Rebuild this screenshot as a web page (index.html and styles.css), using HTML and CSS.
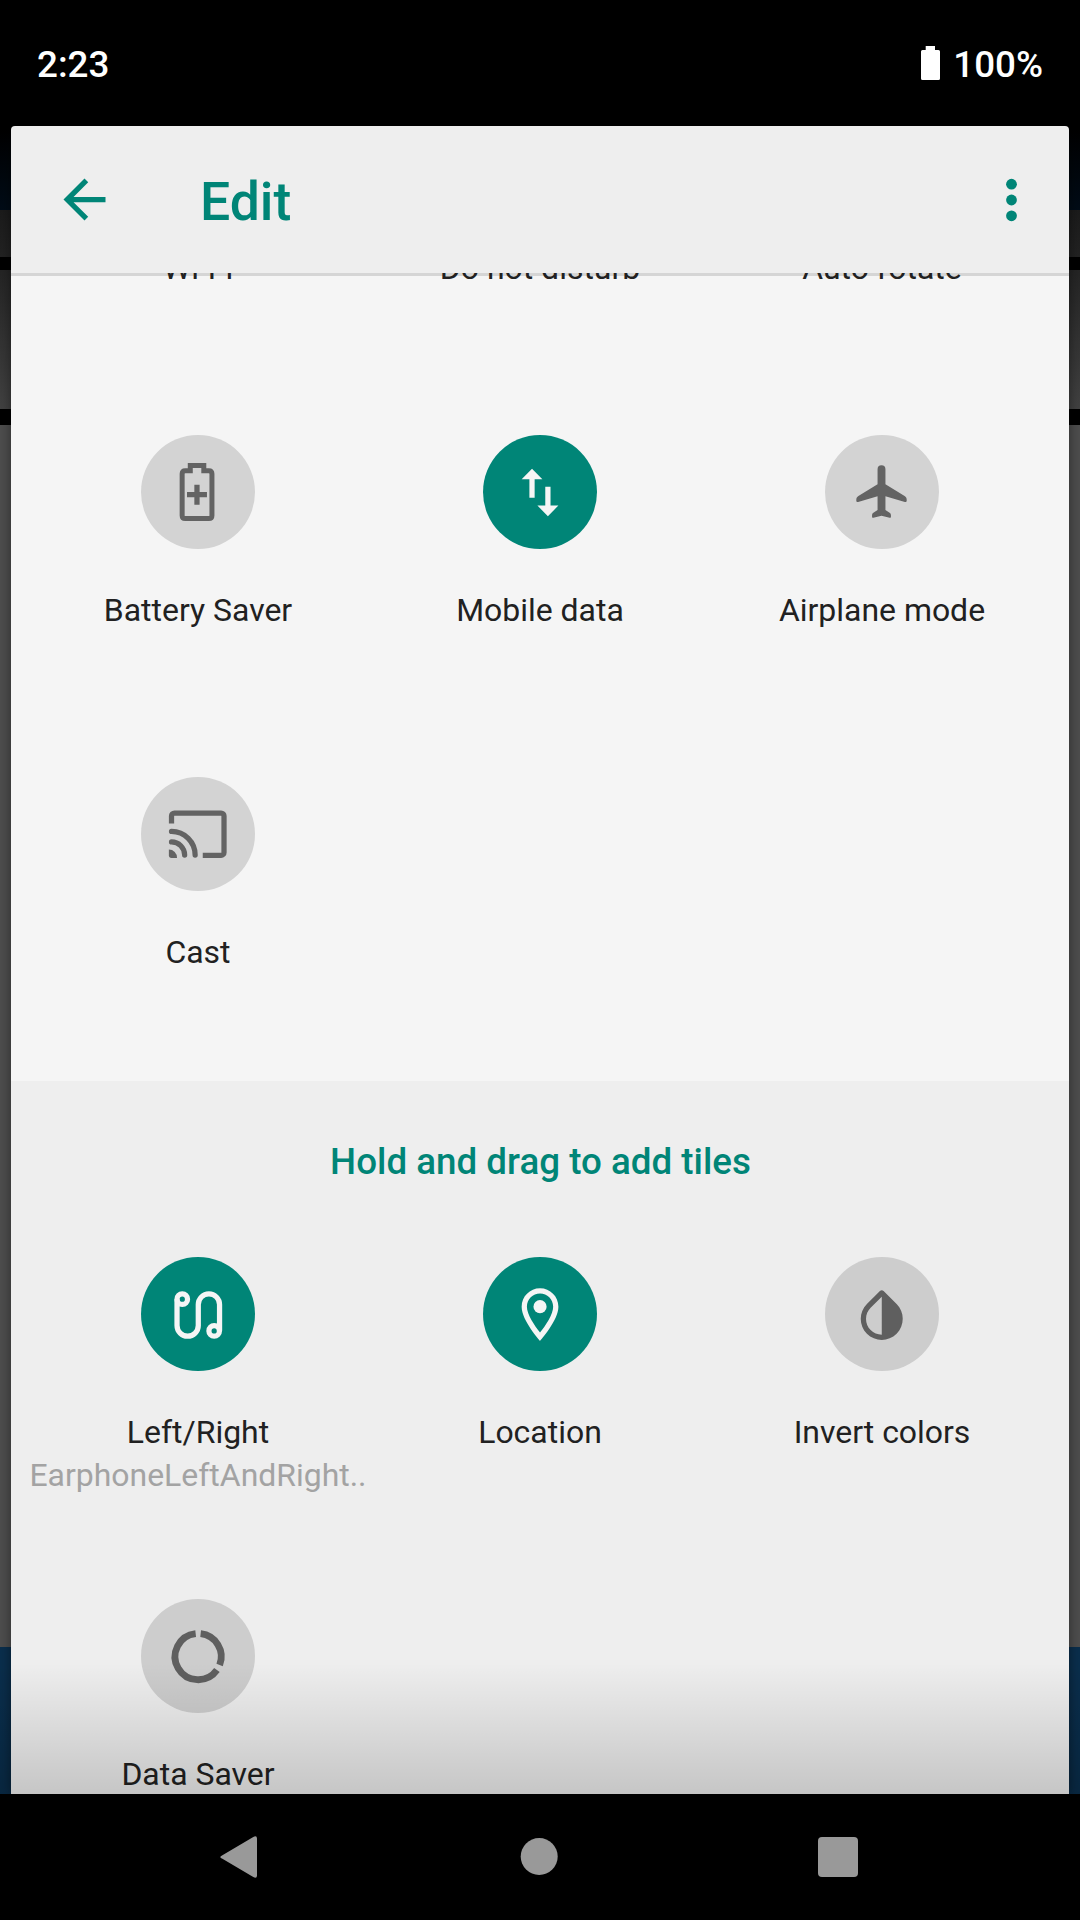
FILE: index.html
```html
<!DOCTYPE html>
<html lang="en">
<head>
<meta charset="utf-8">
<title>Edit quick settings</title>
<link rel="stylesheet" href="styles.css">
</head>
<body>
<div class="screen">
  <header class="status-bar">
    <span class="clock">2:23</span>
    <span class="battery">
      <svg class="battery-icon" viewBox="0 0 19 34"><path d="M4.7 0h9.3v4h3.5q1.5 0 1.5 1.5v27q0 1.5-1.5 1.5h-16q-1.5 0-1.5-1.5v-27q0-1.5 1.5-1.5h3.2z"/></svg>
      <span>100%</span>
    </span>
  </header>

  <div class="stage">
    <div class="gutter">
      <i class="wallpaper"></i><i class="toolbar"></i><i class="bar"></i><i class="card"></i><i class="bar bar-tall"></i><i class="content"></i><i class="dock"></i>
    </div>

    <main class="panel">
      <div class="app-bar">
        <svg class="back" viewBox="0 0 24 24"><path d="M20 11H7.83l5.59-5.59L12 4l-8 8 8 8 1.41-1.41L7.83 13H20z"/></svg>
        <h1>Edit</h1>
        <svg class="more" viewBox="0 0 12 44"><circle cx="5.5" cy="6.2" r="5.4"/><circle cx="5.5" cy="22" r="5.4"/><circle cx="5.5" cy="37.8" r="5.4"/></svg>
      </div>

      <div class="list">
        <section class="tiles active-tiles">
          <div class="tile"><div class="disc on"></div><div class="label">Wi-Fi</div></div>
          <div class="tile"><div class="disc"></div><div class="label">Do not disturb</div></div>
          <div class="tile"><div class="disc"></div><div class="label">Auto-rotate</div></div>

          <div class="tile">
            <div class="disc"><svg viewBox="0 0 24 24"><path class="line" stroke-width="1.9" d="M9.25 2.05H14.4V4.05H16.3q1.2 0 1.2 1.2V21.1q0 1.2-1.2 1.2H7.35q-1.2 0-1.2-1.2V5.25q0-1.2 1.2-1.2H9.25Z"/><path class="line" stroke-width="2" d="M8 13.2h7.6M11.8 9.4V17"/></svg></div>
            <div class="label">Battery Saver</div>
          </div>
          <div class="tile">
            <div class="disc on"><svg viewBox="0 0 24 24"><path d="M9.15 3.35 13.1 7.3H10.15V14.4H8.15V7.3H5.2zM15.2 21.4 11.2 17.35H14.2V10.2H16.2V17.35H19.2z"/></svg></div>
            <div class="label">Mobile data</div>
          </div>
          <div class="tile">
            <div class="disc"><svg viewBox="0 0 24 24"><path d="M13.5 9.2V3.5a1.5 1.5 0 0 0-3 0v5.7l-7.3 4.5c-.5.3-.8.8-.8 1.4v.4c0 .4.3.6.7.5l7.4-2.2v5.2l-1.6 1.1c-.4.3-.5.6-.5 1v.5c0 .3.2.5.5.4L12 21.2l3.1.8c.3.1.5-.1.5-.4v-.5c0-.4-.1-.7-.5-1L13.5 19v-5.2l7.4 2.2c.4.1.7-.1.7-.5v-.4c0-.6-.3-1.1-.8-1.4z"/></svg></div>
            <div class="label">Airplane mode</div>
          </div>

          <div class="tile">
            <div class="disc"><svg viewBox="0 0 24 24"><path class="line" stroke-width="2" d="M2.1 8.2V5.3a1.1 1.1 0 0 1 1.1-1.1H21a1.1 1.1 0 0 1 1.1 1.1V19.2a1.1 1.1 0 0 1-1.1 1.1H14"/><path class="line" stroke-width="2" stroke-linecap="round" d="M2.1 11.2a9 9 0 0 1 9 9M2.1 15.2a5 5 0 0 1 5 5"/><path d="M1.1 18.1a3.1 3.1 0 0 1 3.1 3.2H2.1q-1 0-1-1z"/></svg></div>
            <div class="label">Cast</div>
          </div>
        </section>

        <section class="more-tiles">
          <h2>Hold and drag to add tiles</h2>
          <div class="tiles">
            <div class="tile">
              <div class="disc on"><svg viewBox="0 0 24 24"><path class="line" stroke-width="2" d="M4.2 6.2V16.2a4.05 4.05 0 0 0 8.1 0V8.2a4.05 4.05 0 0 1 8.1 0V18.2"/><circle class="line" stroke-width="2" cx="6.2" cy="6.15" r="2"/><circle class="line" stroke-width="2" cx="18.35" cy="18.25" r="2"/></svg></div>
              <div class="label">Left/Right</div>
              <div class="sublabel">EarphoneLeftAndRight..</div>
            </div>
            <div class="tile">
              <div class="disc on"><svg viewBox="-.2 0 24 24"><path fill-rule="evenodd" d="M12 2C8.13 2 5 5.13 5 9c0 5.25 7 13 7 13s7-7.75 7-13c0-3.87-3.13-7-7-7zM7 9c0-2.76 2.24-5 5-5s5 2.24 5 5c0 2.88-2.88 7.19-5 9.88C9.92 16.21 7 11.85 7 9z"/><circle cx="12" cy="9" r="2.5"/></svg></div>
              <div class="label">Location</div>
            </div>
            <div class="tile">
              <div class="disc"><svg viewBox="-.1 -.1 24 24"><path fill-rule="evenodd" d="M17.66 7.93L12.7 2.97a1 1 0 0 0-1.4 0L6.34 7.93c-3.12 3.12-3.12 8.19 0 11.31C7.9 20.8 9.95 21.58 12 21.58s4.1-.78 5.66-2.34c3.12-3.12 3.12-8.19 0-11.31zM12 19.59c-1.6 0-3.11-.62-4.24-1.76C6.62 16.69 6 15.19 6 13.59s.62-3.11 1.76-4.24L12 5.1z"/></svg></div>
              <div class="label">Invert colors</div>
            </div>
            <div class="tile">
              <div class="disc"><svg viewBox="0 .1 24 24"><path class="line" stroke-width="2.6" d="M13.2 3.4A8.8 8.8 0 0 1 20.43 15.38M19.4 17.27A8.8 8.8 0 1 1 11.3 3.4"/></svg></div>
              <div class="label">Data Saver</div>
            </div>
          </div>
        </section>
      </div>
    </main>

    <div class="gutter gutter-right">
      <i class="wallpaper"></i><i class="toolbar"></i><i class="bar"></i><i class="card"></i><i class="bar bar-tall"></i><i class="content"></i><i class="dock"></i>
    </div>
    <div class="scrim"></div>
  </div>

  <nav class="nav-bar">
    <svg viewBox="0 0 42 42"><path d="M3.4 19.2 34.3.9Q38-.8 38 2.6V39.4Q38 42.8 34.3 41.1L3.4 22.8Q-.8 21 3.4 19.2z"/></svg>
    <svg viewBox="0 0 42 42"><circle cx="21.2" cy="20.5" r="18.5"/></svg>
    <svg viewBox="0 0 42 42"><rect x="1" y="1" width="40" height="40" rx="4"/></svg>
  </nav>
</div>
</body>
</html>
```
FILE: styles.css
```css
* { box-sizing: border-box; margin: 0; }

body {
  background: #000;
  font-family: Roboto, sans-serif;
}

.screen {
  display: flex;
  flex-direction: column;
  width: 1080px;
  height: 1920px;
  overflow: hidden;
}

svg { display: block; fill: currentColor; }
.line { fill: none; stroke: currentColor; }

/* Status bar */
.status-bar {
  display: flex;
  justify-content: space-between;
  align-items: center;
  height: 126px;
  padding: 2px 37px 0 37px;
  color: #fff;
  font-size: 36.75px;
  font-weight: 500;
}
.battery { display: flex; align-items: center; gap: 13px; }
.battery-icon { width: 19px; height: 34px; margin-top: -2px; }

/* Panel over the dimmed app */
.stage {
  position: relative;
  display: flex;
  height: 1668px;
  overflow: hidden;
}
.gutter {
  display: flex;
  flex-direction: column;
  width: 11px;
}
.wallpaper { height: 84px; background: linear-gradient(#000, #010c17); }
.toolbar { height: 47px; background: linear-gradient(#1b1b1b, #222); }
.bar { height: 13px; margin-left: 1px; background: #000; }
.card { height: 139px; background: linear-gradient(#242424, #414141); }
.bar-tall { height: 16px; }
.content { height: 1222px; background: #4d4d4d; }
.dock { height: 147px; background: #0a2e4c; }
.gutter-right .bar { margin: 0 1px 0 0; }

.panel {
  position: relative;
  z-index: 1;
  display: flex;
  flex-direction: column;
  width: 1058px;
  border-radius: 4px 4px 0 0;
  overflow: hidden;
  background: #eee;
  box-shadow: 0 0 12px rgba(0, 0, 0, .45);
}
.app-bar {
  display: flex;
  align-items: center;
  height: 147px;
  padding: 0 51px 0 42px;
  color: #008577;
}
.back { width: 63px; height: 63px; }
h1 {
  flex: 1;
  padding: 3px 0 0 84px;
  font-size: 53.5px;
  font-weight: 500;
}
.more { width: 12px; height: 44px; }

.list {
  flex: 1;
  overflow: hidden;
  background: linear-gradient(#d5d5d5 3px, #f5f5f5 3px);
}

/* Tiles; the list is scrolled part-way through its first row */
.tiles {
  display: grid;
  grid-template-columns: repeat(3, 342px);
  grid-auto-rows: 342px;
  justify-content: center;
}
.active-tiles { height: 988px; margin-top: -180px; }
.tile {
  display: flex;
  flex-direction: column;
  align-items: center;
  color: #636363;
}
.disc {
  display: grid;
  place-items: center;
  width: 114px;
  height: 114px;
  padding: 0 1px 1px 0;
  border-radius: 50%;
  background: #d3d3d3;
}
.disc svg { width: 63px; height: 63px; }
.disc.on { background: #008577; color: #f5f5f5; }
.label, .sublabel {
  font-size: 31.95px;
  line-height: 43px;
  white-space: nowrap;
}
.label { margin-top: 40px; color: #212121; }
.sublabel { color: #a3a3a3; }

.more-tiles { height: 713px; background: #eee; }
.more-tiles .tile { color: #5f5f5f; }
.more-tiles .disc { padding-bottom: 0; }
.more-tiles .disc:not(.on) { background: #cdcdcd; }
h2 {
  height: 176px;
  padding: 59px 0 0 1px;
  color: #008577;
  font-size: 36.75px;
  font-weight: 500;
  line-height: 43px;
  text-align: center;
}

.scrim {
  position: absolute;
  z-index: 2;
  inset: auto 0 0;
  height: 131px;
  background: linear-gradient(transparent, rgba(0, 0, 0, .17));
}

/* Navigation bar */
.nav-bar {
  display: flex;
  justify-content: space-between;
  align-items: center;
  height: 126px;
  padding: 0 221px 0 219px;
  color: #999;
}
.nav-bar svg { width: 42px; height: 42px; }
```
